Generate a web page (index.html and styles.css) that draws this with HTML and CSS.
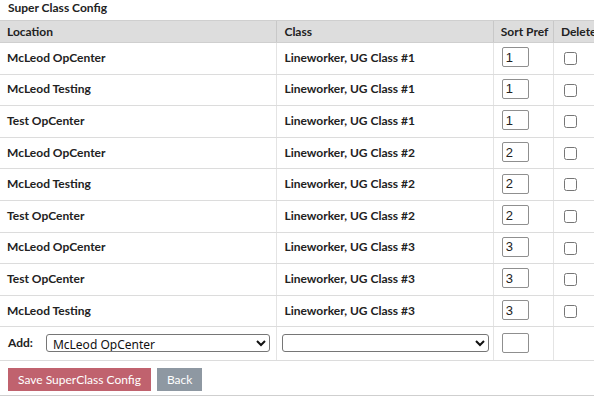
FILE: index.html
```html
<!DOCTYPE html>
<html lang="en">
<head>
    <meta charset="UTF-8">
    <title>Super Class Config</title>
    <link rel="stylesheet" href="styles.css">
</head>
<body>

<div class="title">Super Class Config</div>

<table class="config">
    <thead>
        <tr>
            <th class="col-loc">Location</th>
            <th class="col-class">Class</th>
            <th class="col-sort">Sort Pref</th>
            <th class="col-del">Delete</th>
        </tr>
    </thead>
    <tbody>
        <tr><td>McLeod OpCenter</td><td>Lineworker, UG Class #1</td><td><input class="sort" type="text" value="1"></td><td><input type="checkbox"></td></tr>
        <tr><td>McLeod Testing</td><td>Lineworker, UG Class #1</td><td><input class="sort" type="text" value="1"></td><td><input type="checkbox"></td></tr>
        <tr><td>Test OpCenter</td><td>Lineworker, UG Class #1</td><td><input class="sort" type="text" value="1"></td><td><input type="checkbox"></td></tr>
        <tr><td>McLeod OpCenter</td><td>Lineworker, UG Class #2</td><td><input class="sort" type="text" value="2"></td><td><input type="checkbox"></td></tr>
        <tr><td>McLeod Testing</td><td>Lineworker, UG Class #2</td><td><input class="sort" type="text" value="2"></td><td><input type="checkbox"></td></tr>
        <tr><td>Test OpCenter</td><td>Lineworker, UG Class #2</td><td><input class="sort" type="text" value="2"></td><td><input type="checkbox"></td></tr>
        <tr><td>McLeod OpCenter</td><td>Lineworker, UG Class #3</td><td><input class="sort" type="text" value="3"></td><td><input type="checkbox"></td></tr>
        <tr><td>Test OpCenter</td><td>Lineworker, UG Class #3</td><td><input class="sort" type="text" value="3"></td><td><input type="checkbox"></td></tr>
        <tr><td>McLeod Testing</td><td>Lineworker, UG Class #3</td><td><input class="sort" type="text" value="3"></td><td><input type="checkbox"></td></tr>
        <tr class="add-row">
            <td>
                <div class="add">
                    <span>Add:</span>
                    <select class="loc-select">
                        <option>McLeod OpCenter</option>
                        <option>McLeod Testing</option>
                        <option>Test OpCenter</option>
                    </select>
                </div>
            </td>
            <td class="class-cell"><select class="class-select"><option></option></select></td>
            <td><input class="sort" type="text" value=""></td>
            <td></td>
        </tr>
    </tbody>
</table>

<div class="actions">
    <button class="btn save">Save SuperClass Config</button>
    <button class="btn back">Back</button>
</div>

</body>
</html>
```

FILE: styles.css
```css
body {
    font-family: Lato, "Open Sans", sans-serif;
    font-size: 12px;
    color: #222;
    margin: 0;
    width: 610px;
    overflow: hidden;
}

html {
    overflow: hidden;
}

.title {
    font-weight: bold;
    padding: 0 8px;
    height: 20px;
    line-height: 16px;
}

.config {
    border-collapse: collapse;
    width: 610px;
    table-layout: fixed;
}

.config th,
.config td {
    border-top: 1px solid #dcdcdc;
    border-bottom: 1px solid #dcdcdc;
    border-left: 1px solid #e4e4e4;
    padding: 0 7px 2px;
    font-weight: bold;
    text-align: left;
    white-space: nowrap;
    overflow: hidden;
    height: 28.6px;
}

.config th:first-child,
.config td:first-child {
    border-left: none;
}

.config th {
    background-color: #dddddd;
    height: 20px;
    padding-bottom: 1px;
    border-top: 1px solid #cfcfcf;
    border-bottom: 1px solid #cfcfcf;
    border-left: 1px solid #c8c8c8;
}

.config .add-row td {
    padding: 0 3px 2px 4px;
    height: 30.6px;
}

.config .add-row td:first-child {
    padding-left: 8px;
}

.col-loc { width: 262px; }
.col-class { width: 201px; }
.col-sort { width: 45px; }
.col-del { width: 42px; }

.sort {
    width: 27px;
    height: 20px;
    box-sizing: border-box;
    border: 1px solid #8f8f8f;
    border-radius: 2px;
    padding: 0 3px;
    font-family: "Liberation Sans", Arial, sans-serif;
    font-size: 13px;
    color: #222;
    margin: 0 0 0 1px;
}

.add-row .sort {
    margin-left: 4px;
}

.config input[type="checkbox"] {
    width: 13px;
    height: 13px;
    margin: 0 0 0 3px;
    vertical-align: middle;
}

.add {
    display: flex;
    align-items: center;
    gap: 13px;
}

select {
    height: 18px;
    font-family: "Noto Sans", sans-serif;
    font-size: 12px;
    border: 1px solid #767676;
    border-radius: 3px;
    background: #fff;
    padding: 0 2px;
    color: #111;
    box-sizing: border-box;
}

.loc-select {
    width: 224px;
}

.config .add-row .class-cell {
    padding-left: 5px;
    padding-right: 0;
}

.class-select {
    display: block;
    width: 207px;
}

.actions {
    display: flex;
    gap: 6px;
    padding: 7px 8px 4px;
    border-bottom: 1px solid #cfcfcf;
}

.btn {
    border: none;
    color: #fff;
    font-family: Lato, sans-serif;
    font-size: 12px;
    height: 23px;
    padding: 0 10px;
    cursor: pointer;
}

.save {
    background-color: #c0626e;
}

.back {
    background-color: #8e98a2;
}
```
